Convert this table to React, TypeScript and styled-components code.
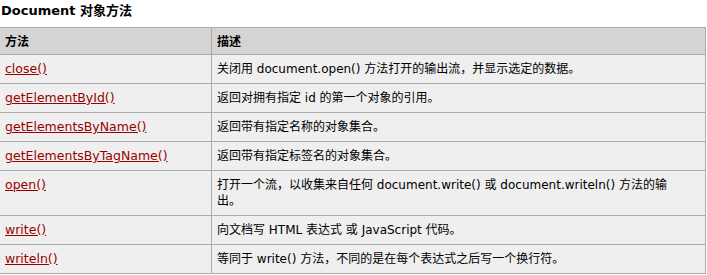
import React from "react";
import styled, { createGlobalStyle } from "styled-components";

const Global = createGlobalStyle`
  html, body { margin: 0; padding: 0; background: #ffffff; }
  body { font-family: "DejaVu Sans", Verdana, "Noto Sans CJK SC", sans-serif; color: #000; }
`;

const Page = styled.div`
  width: 707px;
  overflow: hidden;
`;

const Title = styled.h2`
  margin: 0;
  padding: 3px 0 0 1px;
  height: 27px;
  box-sizing: border-box;
  font-size: 13px;
  line-height: 16px;
  font-weight: bold;
  font-family: "DejaVu Sans", Verdana, "Noto Sans CJK SC", sans-serif;
`;

const Table = styled.table`
  margin-left: -1px;
  width: 707px;
  border-collapse: collapse;
  border: 1px solid #aaaaaa;
  font-size: 12px;
  line-height: 16px;
`;

const Th = styled.th<{ $w?: number }>`
  background: #d4d4d4;
  border: 1px solid #aaaaaa;
  text-align: left;
  font-weight: bold;
  padding: 5px 15px 5px 5px;
  width: ${(p) => (p.$w ? `${p.$w}px` : "auto")};
  font-family: "Noto Sans CJK SC", sans-serif;
  font-size: 12px;
  line-height: 16px;
`;

const Td = styled.td<{ $method?: boolean }>`
  background: #efefef;
  border: 1px solid #aaaaaa;
  padding: 6px 15px 6px 5px;
  vertical-align: top;
  white-space: nowrap;
  line-height: 16px;
  font-size: ${(p) => (p.$method ? "12.5px" : "12px")};
  font-family: "DejaVu Sans", Verdana, "Noto Sans CJK SC", sans-serif;
`;

const Link = styled.a`
  color: #990000;
  text-decoration: underline;
`;

const rows: { name: string; desc: React.ReactNode }[] = [
  { name: "close()", desc: "关闭用 document.open() 方法打开的输出流，并显示选定的数据。" },
  { name: "getElementById()", desc: "返回对拥有指定 id 的第一个对象的引用。" },
  { name: "getElementsByName()", desc: "返回带有指定名称的对象集合。" },
  { name: "getElementsByTagName()", desc: "返回带有指定标签名的对象集合。" },
  {
    name: "open()",
    desc: (
      <>
        打开一个流，以收集来自任何 document.write() 或 document.writeln() 方法的输
        <br />
        出。
      </>
    ),
  },
  { name: "write()", desc: "向文档写 HTML 表达式 或 JavaScript 代码。" },
  { name: "writeln()", desc: "等同于 write() 方法，不同的是在每个表达式之后写一个换行符。" },
];

export default function App() {
  return (
    <Page>
      <Global />
      <Title>Document 对象方法</Title>
      <Table>
        <thead>
          <tr>
            <Th $w={191}>方法</Th>
            <Th>描述</Th>
          </tr>
        </thead>
        <tbody>
          {rows.map((r) => (
            <tr key={r.name}>
              <Td $method>
                <Link href="#">{r.name}</Link>
              </Td>
              <Td>{r.desc}</Td>
            </tr>
          ))}
        </tbody>
      </Table>
    </Page>
  );
}
